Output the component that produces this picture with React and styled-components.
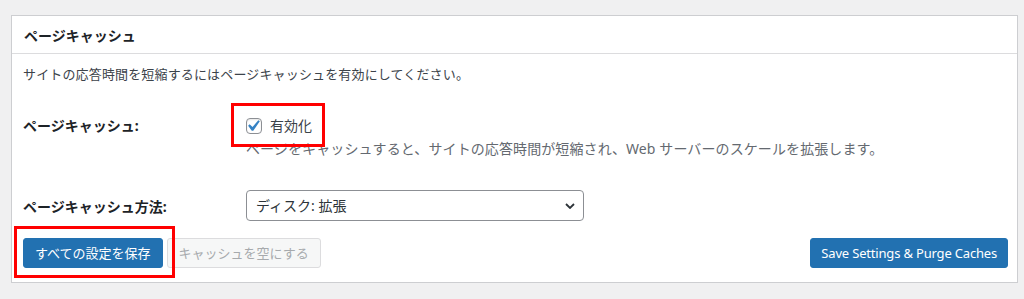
import React from "react";
import styled, { createGlobalStyle, css } from "styled-components";

const GlobalStyle = createGlobalStyle`
  html, body {
    margin: 0;
    padding: 0;
    background: #f0f0f1;
    font-family: "Noto Sans", "Noto Sans CJK JP", sans-serif;
    color: #3c434a;
  }
  * { box-sizing: border-box; }
`;

const Page = styled.div`
  padding: 15px 6px 15px 11px;
`;

const Card = styled.section`
  background: #fff;
  border: 1px solid #cdced1;
`;

const CardHeader = styled.h2`
  margin: 0;
  height: 38px;
  padding: 0 12px;
  display: flex;
  align-items: center;
  font-size: 14px;
  font-weight: 700;
  color: #1d2327;
  border-bottom: 1px solid #dcdcde;
`;

const CardBody = styled.div`
  padding: 10px 9px 14px 11px;
`;

const Intro = styled.p`
  margin: 0;
  font-size: 13px;
  line-height: 20px;
  letter-spacing: 0.15px;
  color: #3c434a;
`;

const FormGrid = styled.div`
  display: grid;
  grid-template-columns: 223px 1fr;
  row-gap: 30px;
  margin-top: 31px;
`;

const FieldLabel = styled.div`
  font-size: 14px;
  font-weight: 700;
  line-height: 22px;
  color: #1d2327;
  align-self: ${(p) => (p.$center ? "center" : "start")};
  padding-top: ${(p) => (p.$center ? "3px" : "0")};
`;

const Field = styled.div`
  display: flex;
  flex-direction: column;
  align-items: flex-start;
`;

const annotate = css`
  position: relative;
  &::after {
    content: "";
    position: absolute;
    border: 3px solid #ff0000;
    pointer-events: none;
    top: ${(p) => p.$box[0]}px;
    right: ${(p) => p.$box[1]}px;
    bottom: ${(p) => p.$box[2]}px;
    left: ${(p) => p.$box[3]}px;
  }
`;

const CheckLabel = styled.label`
  ${annotate}
  display: inline-flex;
  align-items: center;
  gap: 8px;
  font-size: 14px;
  line-height: 22px;
  color: #3c434a;
`;

const CheckBox = styled.span`
  width: 16px;
  height: 16px;
  border: 1px solid #8c8f94;
  border-radius: 4px;
  background: #fff;
  display: inline-flex;
  align-items: center;
  justify-content: center;
  overflow: visible;
  box-shadow: inset 0 1px 2px rgba(0, 0, 0, 0.1);
  svg { flex: none; }
`;

const Description = styled.p`
  margin: 1px 0 0;
  font-size: 14px;
  line-height: 22px;
  letter-spacing: 0.1px;
  color: #646970;
`;

const SelectWrap = styled.div`
  position: relative;
  width: 338px;
  height: 31px;
`;

const Select = styled.select`
  appearance: none;
  width: 100%;
  height: 100%;
  border: 1px solid #8c8f94;
  border-radius: 4px;
  background: #fff;
  padding: 0 24px 0 9px;
  font-family: "Noto Sans", "Noto Sans CJK JP", sans-serif;
  font-size: 14px;
  color: #2c3338;
`;

const Chevron = styled.svg`
  position: absolute;
  right: 9px;
  top: 13px;
  pointer-events: none;
`;

const ButtonRow = styled.div`
  display: flex;
  align-items: center;
  gap: 4px;
  margin-top: 17px;
`;

const Button = styled.button`
  height: 30px;
  padding: 0 ${(p) => (p.$latin ? "10px" : "11px")};
  border-radius: 3px;
  font-family: "Noto Sans", "Noto Sans CJK JP", sans-serif;
  font-size: 13px;
  line-height: 28px;
  letter-spacing: ${(p) => (p.$latin ? "-0.18px" : "0")};
  white-space: nowrap;
  cursor: pointer;
  ${(p) =>
    p.$variant === "primary"
      ? css`
          background: #2271b1;
          border: 1px solid #2271b1;
          color: #fff;
        `
      : css`
          background: #f6f7f7;
          border: 1px solid #dcdcde;
          color: #a7aaad;
          cursor: default;
        `}
  ${(p) => p.$push && css`margin-left: auto;`}
`;

const Annotated = styled.span`
  ${annotate}
  display: inline-flex;
`;

export default function App() {
  return (
    <>
      <GlobalStyle />
      <Page>
        <Card>
          <CardHeader>ページキャッシュ</CardHeader>
          <CardBody>
            <Intro>サイトの応答時間を短縮するにはページキャッシュを有効にしてください。</Intro>
            <FormGrid>
              <FieldLabel>ページキャッシュ:</FieldLabel>
              <Field>
                <CheckLabel $box={[-12, -13, -10, -15]}>
                  <CheckBox>
                    <svg width="18" height="18" viewBox="3 2 16 16">
                      <path
                        d="M14.83 4.89l1.34.94-5.81 8.38H9.02L5.78 9.67l1.34-1.25 2.57 2.4z"
                        fill="#3582c4"
                      />
                    </svg>
                  </CheckBox>
                  有効化
                </CheckLabel>
                <Description>
                  ページをキャッシュすると、サイトの応答時間が短縮され、Web サーバーのスケールを拡張します。
                </Description>
              </Field>
              <FieldLabel $center>ページキャッシュ方法:</FieldLabel>
              <Field>
                <SelectWrap>
                  <Select defaultValue="disk">
                    <option value="disk">ディスク: 拡張</option>
                  </Select>
                  <Chevron width="10" height="6" viewBox="0 0 10 6">
                    <polyline
                      points="1,1 5,5 9,1"
                      fill="none"
                      stroke="#2c3338"
                      strokeWidth="1.8"
                    />
                  </Chevron>
                </SelectWrap>
              </Field>
            </FormGrid>
            <ButtonRow>
              <Annotated $box={[-12, -12, -10, -9]}>
                <Button $variant="primary">すべての設定を保存</Button>
              </Annotated>
              <Button disabled>キャッシュを空にする</Button>
              <Button $variant="primary" $latin $push>
                Save Settings &amp; Purge Caches
              </Button>
            </ButtonRow>
          </CardBody>
        </Card>
      </Page>
    </>
  );
}
